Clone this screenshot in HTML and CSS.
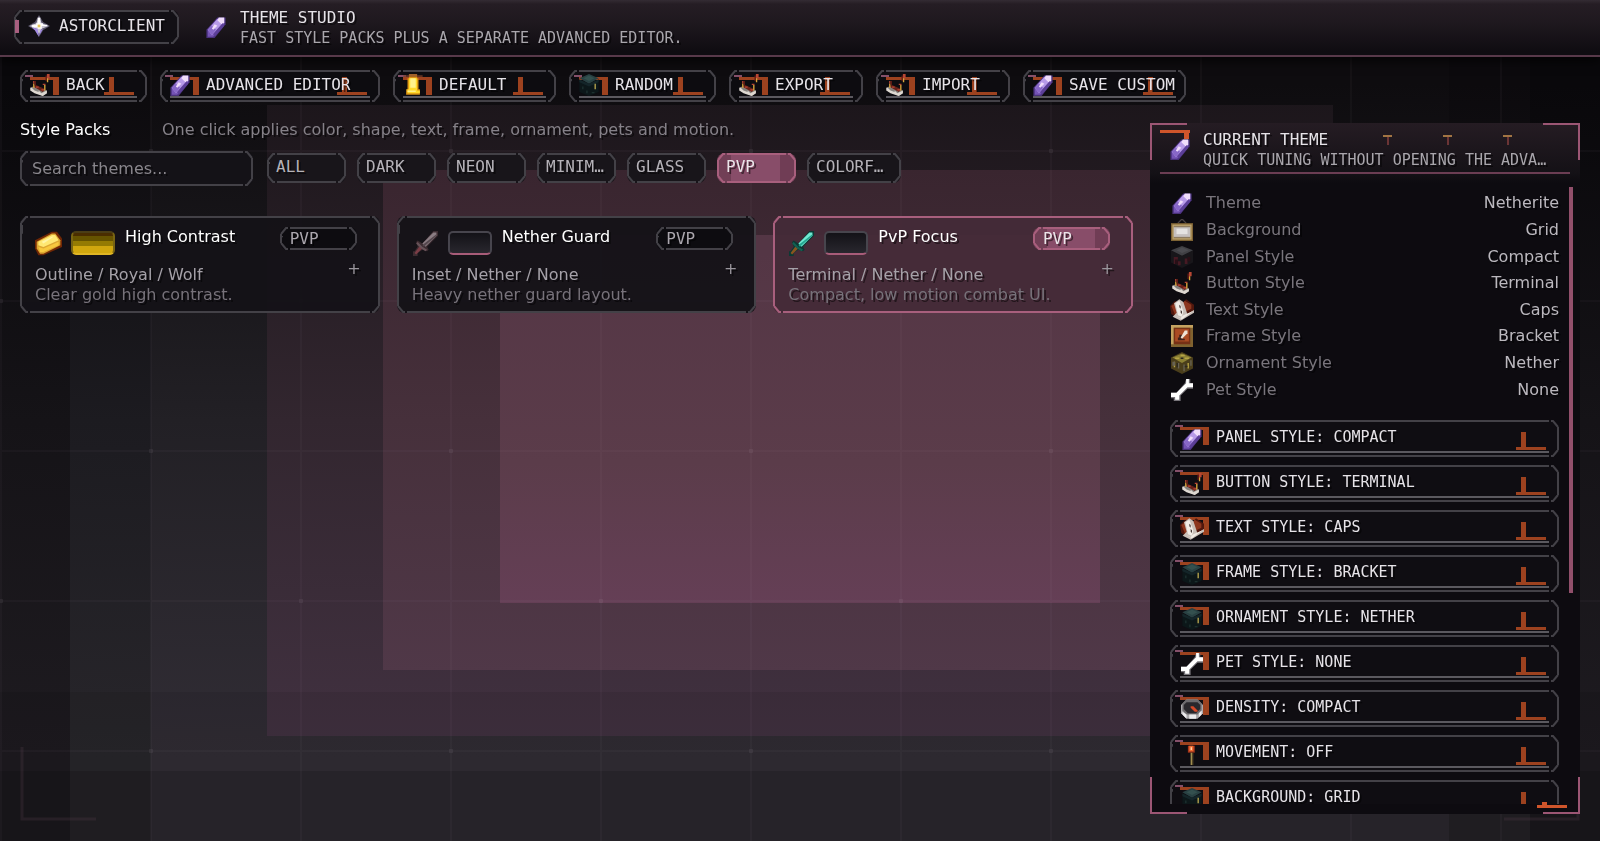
FILE: index.html
```html
<!DOCTYPE html>
<html lang="en">
<head>
<meta charset="utf-8">
<title>Theme Studio</title>
<link rel="stylesheet" href="styles.css">
</head>
<body>
<svg class="backdrop" viewBox="0 0 1600 841" preserveAspectRatio="none" aria-hidden="true">
  <defs>
    <linearGradient id="g0" x1="0" y1="0" x2="0" y2="841" gradientUnits="userSpaceOnUse"><stop offset=".1" stop-color="#09080b"/><stop offset=".5" stop-color="#151317"/><stop offset=".9" stop-color="#1e1b20"/></linearGradient>
    <linearGradient id="g1" x1="0" y1="0" x2="0" y2="841" gradientUnits="userSpaceOnUse"><stop offset=".1" stop-color="#0c0a0d"/><stop offset=".5" stop-color="#1c1b20"/><stop offset=".9" stop-color="#28262b"/></linearGradient>
    <linearGradient id="g2" x1="0" y1="0" x2="0" y2="841" gradientUnits="userSpaceOnUse"><stop offset=".1" stop-color="#0e0c0f"/><stop offset=".5" stop-color="#222025"/><stop offset=".9" stop-color="#312d35"/></linearGradient>
    <linearGradient id="g3" x1="0" y1="0" x2="0" y2="841" gradientUnits="userSpaceOnUse"><stop offset=".12" stop-color="#1c161b"/><stop offset=".5" stop-color="#32262f"/><stop offset=".88" stop-color="#413140"/></linearGradient>
    <linearGradient id="g4" x1="0" y1="0" x2="0" y2="841" gradientUnits="userSpaceOnUse"><stop offset=".2" stop-color="#39252f"/><stop offset=".5" stop-color="#46303b"/><stop offset=".8" stop-color="#503848"/></linearGradient>
    <linearGradient id="g5" x1="0" y1="0" x2="0" y2="841" gradientUnits="userSpaceOnUse"><stop offset=".3" stop-color="#543645"/><stop offset=".55" stop-color="#5b3c4a"/><stop offset=".72" stop-color="#653f56"/></linearGradient>
    <pattern id="grid" x="150" y="0" width="150" height="150" patternUnits="userSpaceOnUse"><path d="M0 0h150v2H0zM0 2h2v148H0z" fill="#cbb8c8" opacity=".035"/></pattern>
    <pattern id="dots" x="148" y="148" width="300" height="300" patternUnits="userSpaceOnUse"><path d="M1 1h4v4H1zM151 151h4v4h-4z" fill="#cbb8c8" opacity=".08"/></pattern>
  </defs>
  <path d="M0 0h1600v841H0z" fill="url(#g0)"/>
  <path d="M70 57h1460v784H70z" fill="url(#g1)"/>
  <path d="M151 57h1298v784H151z" fill="url(#g2)"/>
  <path d="M267 105h1066v631H267z" fill="url(#g3)"/>
  <path d="M383 170h834v500H383z" fill="url(#g4)"/>
  <path d="M500 235h600v368H500z" fill="url(#g5)"/>
  <path d="M0 692h1600v79H0z" fill="#000" opacity=".08"/>
  <path d="M0 771h1600v70H0z" fill="#000" opacity=".22"/>
  <path d="M0 57h1600v784H0z" fill="url(#grid)"/>
  <path d="M0 57h1600v784H0z" fill="url(#dots)"/>
  <path d="M22 747v72h74M1578 747v72h-74" fill="none" stroke="#59414f" stroke-width="3" opacity=".25"/>
</svg>
<svg class="sprites" aria-hidden="true">
  <symbol id="crystal" viewBox="0 0 16 16"><path fill="#49317c" d="M9 1h6v5L7 16H1v-6z"/><path fill="#7453b5" d="M9 2h5v4l-8 9H2v-5z"/><path fill="#b79ae8" d="M9 2l4 3-8 9-3-4z"/><path fill="#8767c7" d="M5 7l3 3-3 4-3-4z"/><path fill="#f0ddfb" d="M10 1h4v4l-2 1-3-3zM7 6l2 1-3 3-1-1z"/><path fill="#5c3f98" d="M13 5l1 2-7 8-1-2z"/></symbol>
  <symbol id="star" viewBox="0 0 16 16"><path fill="#575368" d="M8 0l3 5 5 3-5 3-3 5-3-5-5-3 5-3z"/><path fill="#c8c5d2" d="M8 1l2 5 5 2-5 2-2 4-2-4-5-2 5-2z"/><path fill="#fff" d="M7 2h2v4h2v1h3v1h-4v2H7V9H3V7h3V6h1z"/><path fill="#a38ae4" d="M3 9l4 1 1 6-3-5zM9 11l2-1-3 5z"/><path fill="#e3c961" d="M7 7h2v2H7z"/></symbol>
  <symbol id="comparator" viewBox="0 0 16 16"><path fill="#85817d" d="M1 10l2-1 10 3v2l-3 2-9-4z"/><path fill="#ded8d1" d="M1 10h1l2 2 3 1v-1l2 2 4-2v2l-3 2-6-2-3-2z"/><path fill="#672018" d="M3 9l2-1 7 3-2 2z"/><path fill="#b84734" d="M5 9h2v1H5zM9 11h2v1H9zM3 5h1v2H3zM13 0h2v3h-2zM10 7h2v1h-2z"/><path fill="#d7a63c" d="M3 7h1v3H3zM13 3h1v3h-1zM11 8h1v4h-1z"/><path fill="#671c15" d="M12 1h1v4h-1zM4 5h1v3H4z"/></symbol>
  <symbol id="bell" viewBox="0 0 16 16"><path fill="#7a3f2a" d="M1 1h14v1H1z"/><path fill="#a0612b" d="M5 0h6v2H5z"/><path fill="#d99113" d="M5 2h6v1h1v8h1v4H3v-4h1V3h1z"/><path fill="#ffd929" d="M5 3h6v9h2v2H4v-3h1z"/><path fill="#fff18b" d="M6 3h4v7H6zM4 12h6v1H4z"/></symbol>
  <symbol id="chest" viewBox="0 0 16 16"><path fill="#0c1719" d="M1 4l7 3 7-3v9l-7 3-7-3z"/><path fill="#294143" d="M1 3l7-3 7 3-7 4z"/><path fill="#34504f" d="M4 3l4-2 4 2-4 2z"/><path fill="#142529" d="M1 4l7 3v2L1 6zM8 7l7-3v2L8 9z"/><path fill="#b4a34d" d="M12 7h1v4h-1z"/><path fill="#1c302f" d="M3 9h1v2H3zM6 12h1v2H6zM10 13h2v1h-2z"/></symbol>
  <symbol id="painting" viewBox="0 0 16 16"><path fill="none" stroke="#484143" d="M5 3l3-3 3 3"/><path fill="#7e6334" d="M0 3h16v13H0z"/><path fill="#baa16a" d="M1 4h14v11H1z"/><path fill="#8d7b60" d="M2 5h12v9H2z"/><path fill="#c5c0bf" d="M2 6h12v7H2z"/><path fill="#e4e2e1" d="M4 7h8v4H4z"/></symbol>
  <symbol id="block" viewBox="0 0 16 16"><path fill="#18161a" d="M0 3l8 4 8-4v9l-8 4-8-4z"/><path fill="#404044" d="M0 3l8-3 8 3-8 4z"/><path fill="#4b4b50" d="M4 3l4-2 5 2-5 2z"/><path fill="#461923" d="M2 8h3v2H3v3H2zM5 11h2v3H5zM10 9h2v4h-2z"/><path fill="#290f16" d="M3 10h2v3H3zM12 8h2v3h-2z"/></symbol>
  <symbol id="book" viewBox="0 0 18 16"><path fill="#50170d" d="M0 5l4-4 3 5 5-6 6 4v5L7 15l-6-4z"/><path fill="#8c361e" d="M1 5l3-2 3 7-3 2zM11 1l5 3v3l-6 3-2-5z"/><path fill="#c8bfb8" d="M3 3l4-3 3 2 3 9 5-3v2L8 16l-6-3 3-3z"/><path fill="#f1ece6" d="M4 3l3-2 3 8-1 4-3-1zM4 12l4 2 2-2 7-3-8 6z"/><path fill="#463936" d="M7 4l1 1v2L7 6zM8 8l1 1v2L8 10z"/></symbol>
  <symbol id="frame" viewBox="0 0 16 16"><path fill="#80622f" d="M0 0h16v16H0z"/><path fill="#c4a260" d="M0 0h16v2H2v12H0z"/><path fill="#763015" d="M2 2h12v12H2z"/><path fill="#ab4b23" d="M3 3h10v9H3z"/><path fill="#3e211a" d="M6 7h2v3h2v1H5V9h1z"/><path fill="#eee3d5" d="M7 9l3-5h2v2l-4 4z"/></symbol>
  <symbol id="hay" viewBox="0 0 16 16"><path fill="#4a3e1b" d="M0 4l8-4 8 4v8l-8 4-8-4z"/><path fill="#8b8034" d="M1 4l7-3 7 3-7 4z"/><path fill="#b5a445" d="M3 4h3v1H3zM7 2h3v1H7zM10 4h3v1h-3zM2 7h1v4H2zM12 8h1v4h-1z"/><path fill="#676253" d="M1 7h2v3H1zM5 8h1v4H5zM9 9h1v5H9zM14 6h1v4h-1z"/><path fill="#2c2820" d="M4 8h1v3H4zM10 10h2v1h-2zM7 4h2v1H7z"/></symbol>
  <symbol id="bone" viewBox="0 0 16 16"><path fill="#77747a" d="M11 0h3v3h2v4h-4l-5 5v4H2v-2H0v-4h4l6-7z"/><path fill="#fff" d="M11 0h2v3h3v3h-4l-6 6v3H3v-2H0v-3h4l7-7z"/></symbol>
  <symbol id="compass" viewBox="0 0 16 16"><path fill="#aaa8ab" d="M4 1h8l4 4v6l-4 4H4l-4-4V5z"/><path fill="#6c6a6d" d="M4 1h8l3 3v5l-3 3H4L1 9V4z"/><path fill="#29272c" d="M4 3h8l2 2v3l-3 3H5L2 8V5z"/><path fill="#ecebed" d="M1 10l3 2v3l-3-3zM6 12h5v3H6zM13 11l2-2v3l-2 2z"/><path fill="#d54827" d="M7 6h2l3 3v1h-2L7 7z"/></symbol>
  <symbol id="torch" viewBox="0 0 16 16"><path fill="#a7361c" d="M5 2h5v5H5z"/><path fill="#ed6b32" d="M6 2h3v4H6z"/><path fill="#ffd6ae" d="M7 3h1v2H7z"/><path fill="#9f8c4e" d="M7 7h1v9H7z"/><path fill="#514426" d="M8 7h1v9H8z"/></symbol>
  <symbol id="ingot" viewBox="0 0 16 14"><path fill="#702705" d="M0 5l10-5h3l3 4v5L5 14H2L0 10z"/><path fill="#dda832" d="M1 6l9-5h2l3 4v3L5 13H3l-2-3z"/><path fill="#ffe873" d="M2 6l8-4h2l2 3-9 4-3-1z"/><path fill="#fff5a8" d="M4 6l6-3h1L5 7z"/><path fill="#f8c93f" d="M2 9l3 1 9-4v2l-9 4H3z"/></symbol>
  <symbol id="sword" viewBox="0 0 16 16"><path fill="var(--edge)" d="M13 0h3v3L9 10l1 2-1 1-3-1-3 2v2H0v-3h1l2-3-1-3 1-1 3 2z"/><path fill="var(--blade)" d="M13 1h2v2L8 10 6 8z"/><path fill="var(--shade)" d="M15 2v1l-8 7-1-1z"/><path fill="var(--grip)" d="M4 10l2 1-4 4-1-1z"/><path fill="var(--guard)" d="M3 7l3 3 3 2-1 1-3-2-3-3z"/></symbol>
  <symbol id="bracket-tl" viewBox="0 0 34 22"><path fill="#9d421f" d="M5 2h30v3h-1v15h-6V5H5z"/><path fill="#84506a" d="M0 0h8v2H0z"/></symbol>
  <symbol id="bracket-br" viewBox="0 0 30 18"><path fill="#9d421f" d="M5 0h5v15h20v3H0v-3h5z"/></symbol>
</svg>

<header class="header">
  <button class="brand frame"><svg class="icon"><use href="#star"/></svg>ASTORCLIENT</button>
  <svg class="icon"><use href="#crystal"/></svg>
  <div class="heading">
    <h1>THEME STUDIO</h1>
    <p>FAST STYLE PACKS PLUS A SEPARATE ADVANCED EDITOR.</p>
  </div>
</header>

<nav class="toolbar" aria-label="Theme actions">
  <button class="action frame w-back"><svg class="tl"><use href="#bracket-tl"/></svg><svg class="br"><use href="#bracket-br"/></svg><svg class="icon"><use href="#comparator"/></svg><span>BACK</span></button>
  <button class="action frame w-advanced"><svg class="tl"><use href="#bracket-tl"/></svg><svg class="br"><use href="#bracket-br"/></svg><svg class="icon"><use href="#crystal"/></svg><span>ADVANCED EDITOR</span></button>
  <button class="action frame w-wide"><svg class="tl"><use href="#bracket-tl"/></svg><svg class="br"><use href="#bracket-br"/></svg><svg class="icon"><use href="#bell"/></svg><span>DEFAULT</span></button>
  <button class="action frame w-random"><svg class="tl"><use href="#bracket-tl"/></svg><svg class="br"><use href="#bracket-br"/></svg><svg class="icon"><use href="#chest"/></svg><span>RANDOM</span></button>
  <button class="action frame w-port"><svg class="tl"><use href="#bracket-tl"/></svg><svg class="br"><use href="#bracket-br"/></svg><svg class="icon"><use href="#comparator"/></svg><span>EXPORT</span></button>
  <button class="action frame w-port"><svg class="tl"><use href="#bracket-tl"/></svg><svg class="br"><use href="#bracket-br"/></svg><svg class="icon"><use href="#comparator"/></svg><span>IMPORT</span></button>
  <button class="action frame w-wide"><svg class="tl"><use href="#bracket-tl"/></svg><svg class="br"><use href="#bracket-br"/></svg><svg class="icon"><use href="#crystal"/></svg><span>SAVE CUSTOM</span></button>
</nav>

<main class="main">
  <section class="packs">
    <div class="packs-head">
      <h2>Style Packs</h2>
      <p>One click applies color, shape, text, frame, ornament, pets and motion.</p>
    </div>
    <div class="filters">
      <input class="search frame" type="text" placeholder="Search themes..." aria-label="Search themes">
      <button class="chip frame">ALL</button>
      <button class="chip frame">DARK</button>
      <button class="chip frame">NEON</button>
      <button class="chip frame">MINIM…</button>
      <button class="chip frame">GLASS</button>
      <button class="chip frame active" aria-pressed="true">PVP</button>
      <button class="chip frame long">COLORF…</button>
    </div>
    <div class="cards">
      <article class="card frame">
        <div class="card-head"><svg class="icon large"><use href="#ingot"/></svg><span class="swatch gold"></span><h3>High Contrast</h3><span class="tag frame">PVP</span></div>
        <p class="styles">Outline / Royal / Wolf</p>
        <p class="note">Clear gold high contrast.</p>
        <button class="add" aria-label="Add High Contrast">+</button>
      </article>
      <article class="card frame">
        <div class="card-head"><svg class="icon large netherite"><use href="#sword"/></svg><span class="swatch"></span><h3>Nether Guard</h3><span class="tag frame">PVP</span></div>
        <p class="styles">Inset / Nether / None</p>
        <p class="note">Heavy nether guard layout.</p>
        <button class="add" aria-label="Add Nether Guard">+</button>
      </article>
      <article class="card frame selected">
        <div class="card-head"><svg class="icon large diamond"><use href="#sword"/></svg><span class="swatch"></span><h3>PvP Focus</h3><span class="tag frame active">PVP</span></div>
        <p class="styles">Terminal / Nether / None</p>
        <p class="note">Compact, low motion combat UI.</p>
        <button class="add" aria-label="Add PvP Focus">+</button>
      </article>
    </div>
  </section>

  <aside class="panel">
    <svg class="pins" viewBox="0 0 130 12"><path fill="#a17443" d="M0 0h9v2H0zM60 0h9v2h-9zM120 0h9v2h-9z"/><path fill="#6b3435" d="M4 2h2v8H4zM64 2h2v8h-2zM124 2h2v8h-2z"/></svg>
    <header class="panel-head">
      <svg class="hook" viewBox="0 0 30 30"><path fill="#cf552b" d="M0 0h30v3h-1v6h-5V3H0z"/><use href="#crystal" x="9" y="8" width="22" height="22"/></svg>
      <div>
        <h2>CURRENT THEME</h2>
        <p>QUICK TUNING WITHOUT OPENING THE ADVA…</p>
      </div>
    </header>
    <div class="panel-body">
      <dl class="facts">
        <div><dt><svg class="icon"><use href="#crystal"/></svg>Theme</dt><dd>Netherite</dd></div>
        <div><dt><svg class="icon"><use href="#painting"/></svg>Background</dt><dd>Grid</dd></div>
        <div><dt><svg class="icon"><use href="#block"/></svg>Panel Style</dt><dd>Compact</dd></div>
        <div><dt><svg class="icon"><use href="#comparator"/></svg>Button Style</dt><dd>Terminal</dd></div>
        <div><dt><svg class="icon"><use href="#book"/></svg>Text Style</dt><dd>Caps</dd></div>
        <div><dt><svg class="icon"><use href="#frame"/></svg>Frame Style</dt><dd>Bracket</dd></div>
        <div><dt><svg class="icon"><use href="#hay"/></svg>Ornament Style</dt><dd>Nether</dd></div>
        <div><dt><svg class="icon"><use href="#bone"/></svg>Pet Style</dt><dd>None</dd></div>
      </dl>
      <div class="options">
        <button class="action frame"><svg class="tl"><use href="#bracket-tl"/></svg><svg class="br"><use href="#bracket-br"/></svg><svg class="icon"><use href="#crystal"/></svg><span>PANEL STYLE: COMPACT</span></button>
        <button class="action frame"><svg class="tl"><use href="#bracket-tl"/></svg><svg class="br"><use href="#bracket-br"/></svg><svg class="icon"><use href="#comparator"/></svg><span>BUTTON STYLE: TERMINAL</span></button>
        <button class="action frame"><svg class="tl"><use href="#bracket-tl"/></svg><svg class="br"><use href="#bracket-br"/></svg><svg class="icon"><use href="#book"/></svg><span>TEXT STYLE: CAPS</span></button>
        <button class="action frame"><svg class="tl"><use href="#bracket-tl"/></svg><svg class="br"><use href="#bracket-br"/></svg><svg class="icon"><use href="#chest"/></svg><span>FRAME STYLE: BRACKET</span></button>
        <button class="action frame"><svg class="tl"><use href="#bracket-tl"/></svg><svg class="br"><use href="#bracket-br"/></svg><svg class="icon"><use href="#chest"/></svg><span>ORNAMENT STYLE: NETHER</span></button>
        <button class="action frame"><svg class="tl"><use href="#bracket-tl"/></svg><svg class="br"><use href="#bracket-br"/></svg><svg class="icon"><use href="#bone"/></svg><span>PET STYLE: NONE</span></button>
        <button class="action frame"><svg class="tl"><use href="#bracket-tl"/></svg><svg class="br"><use href="#bracket-br"/></svg><svg class="icon"><use href="#compass"/></svg><span>DENSITY: COMPACT</span></button>
        <button class="action frame"><svg class="tl"><use href="#bracket-tl"/></svg><svg class="br"><use href="#bracket-br"/></svg><svg class="icon"><use href="#torch"/></svg><span>MOVEMENT: OFF</span></button>
        <button class="action frame"><svg class="tl"><use href="#bracket-tl"/></svg><svg class="br"><use href="#bracket-br"/></svg><svg class="icon"><use href="#chest"/></svg><span>BACKGROUND: GRID</span></button>
      </div>
    </div>
    <span class="scrollbar"></span>
    <svg class="foot" viewBox="0 0 30 6"><path fill="#cf552b" d="M5 0h5v3h20v3H0V3h5z"/></svg>
  </aside>
</main>
</body>
</html>
```

FILE: styles.css
```css
* { box-sizing: border-box; }

body {
  margin: 0;
  height: 100vh;
  display: flex;
  flex-direction: column;
  overflow: hidden;
  background: #09080b;
  color: #e6e3e8;
  font: 16px/20px "DejaVu Sans", sans-serif;
  text-shadow: 2px 2px 0 rgba(0, 0, 0, .5);
}

h1, h2, h3, p, dl, dd { margin: 0; font-size: 16px; font-weight: 400; }
button, input { font: inherit; color: inherit; text-shadow: inherit; margin: 0; }
button { cursor: pointer; }

.backdrop { position: fixed; inset: 0; width: 100%; height: 100%; z-index: -1; }
.sprites { position: absolute; width: 0; height: 0; }
.icon { width: 24px; height: 22px; flex: none; }

/* Notched outline: straight edges, cut just before each chamfered corner */
.frame {
  position: relative;
  border: 2px solid transparent;
  border-radius: 8px;
  border-image: url("data:image/svg+xml,%3Csvg xmlns='http://www.w3.org/2000/svg' width='30' height='30'%3E%3Cpath d='M10 1h10M10 29h10M1 10h2M1 7v16M29 7v16M8 1H6L1 7M22 1h2l5 6M8 29H6l-5-6M22 29h2l5-6' fill='none' stroke='%23434147' stroke-width='2'/%3E%3C/svg%3E") 10 / 10px stretch;
  background: #0d0c10;
}
.chip.active, .tag.active, .card.selected {
  border-image-source: url("data:image/svg+xml,%3Csvg xmlns='http://www.w3.org/2000/svg' width='30' height='30'%3E%3Cpath d='M10 1h10M10 29h10M1 7v16M29 7v16M8 1H6L1 7M22 1h2l5 6M8 29H6l-5-6M22 29h2l5-6' fill='none' stroke='%23a85f7d' stroke-width='2'/%3E%3C/svg%3E");
}

.header {
  height: 57px;
  flex: none;
  display: flex;
  align-items: center;
  padding: 0 14px 2px;
  border-bottom: 2px solid #58394a;
  background: linear-gradient(#332b33 0, #251d24 4px, #1e181e 24px, #0f0c11 52px);
  box-shadow: 0 4px 10px rgba(0, 0, 0, .7);
}
.header > .icon { margin: 0 12px 0 25px; }
.heading { padding-top: 3px; }
.brand {
  width: 165px;
  height: 34px;
  padding: 0 0 1px 11px;
  display: flex;
  align-items: center;
  gap: 8px;
  background: #121015;
}
.brand::before {
  content: "";
  position: absolute;
  left: -1px;
  top: 8px;
  width: 4px;
  height: 13px;
  background: #a95f80;
}
.brand, .heading, .action, .chip, .tag, .panel-head { font-family: "DejaVu Sans Mono", monospace; }
.heading p, .panel-head p { font-size: 15px; color: #a9a6ac; }

.toolbar { display: flex; gap: 13px; padding: 13px 20px 0; }
.action {
  height: 32px;
  padding: 0 0 2px 6px;
  display: flex;
  align-items: center;
  gap: 14px;
  text-align: left;
  white-space: nowrap;
}
.action::after {
  content: "";
  position: absolute;
  left: 8px;
  right: 8px;
  bottom: 2px;
  height: 2px;
  background: #5b595f;
}
.action > .icon, .action > span { position: relative; }
.tl { position: absolute; left: 3px; top: 3px; width: 34px; height: 22px; }
.br { position: absolute; right: 11px; bottom: 5px; width: 30px; height: 18px; }
.w-back { width: 127px; }
.w-advanced { width: 220px; }
.w-wide { width: 163px; }
.w-random { width: 147px; }
.w-port { width: 134px; }

.main {
  flex: 1;
  min-height: 0;
  display: grid;
  grid-template-columns: 1fr 430px;
  gap: 17px;
  padding: 19px 20px 27px;
}

.packs-head { display: flex; gap: 46px; line-height: 18px; }
.packs-head h2 { color: #fff; width: 96px; white-space: nowrap; }
.packs-head p { color: #858188; }

.filters { display: flex; align-items: flex-start; gap: 11px; margin-top: 12px; }
.search {
  width: 233px;
  height: 35px;
  margin-right: 3px;
  padding: 0 10px;
  background: #141217;
}
.search::placeholder { color: #89868c; opacity: 1; }
.chip {
  width: 79px;
  height: 30px;
  margin-top: 2px;
  padding: 0 0 3px 7px;
  text-align: left;
  white-space: nowrap;
  background: #18151a;
  color: #b5b2b8;
}
.chip.long { width: 94px; }
.chip.active, .tag.active {
  color: #eae5e9;
  background: linear-gradient(90deg, #713f56 0 12px, #884d69 12px 82%, #703d55 82%);
}

.cards { display: grid; grid-template-columns: repeat(3, 1fr); gap: 17px; margin-top: 30px; }
.card { height: 97px; padding: 10px 21px 0 13px; background: rgba(20, 18, 23, .95); }
.card.selected { background: rgba(68, 43, 55, .94); }
.card-head { display: flex; height: 37px; }
.icon.large { width: 27px; height: 25px; margin-top: 3px; }
.card h3 { flex: 1; margin-left: 10px; line-height: 18px; color: #fff; white-space: nowrap; }
.swatch {
  width: 44px;
  height: 24px;
  margin: 3px 0 0 9px;
  border: 2px solid #47454d;
  border-bottom-color: #a85c79;
  border-radius: 5px;
  background: linear-gradient(#131217, #29272e);
}
.swatch.gold { border-color: #4b3d15 #786413 #dfb524; background: linear-gradient(#4a2d00 0 3px, #665300 3px 8px, #957b03 8px 13px, #d1a70e 13px); }
.tag {
  width: 77px;
  height: 23px;
  margin-top: -1px;
  padding-left: 8px;
  line-height: 19px;
  color: #aba7ae;
}
.styles { color: #a5a1a8; }
.note { color: #77727a; }
.add {
  position: absolute;
  right: 17px;
  top: 41px;
  padding: 0;
  border: 0;
  background: none;
  color: #99959c;
}

.netherite { --edge: #3c2c31; --blade: #8a7c82; --shade: #54474d; --grip: #7b3d46; --guard: #685359; }
.diamond { --edge: #0b3934; --blade: #72ead3; --shade: #25a690; --grip: #8a551f; --guard: #126052; }

.panel {
  position: relative;
  min-height: 0;
  margin-top: 2px;
  padding: 4px 10px 10px;
  display: flex;
  flex-direction: column;
  --pink: #9c5674;
  background:
    linear-gradient(var(--pink) 0 0) 0 0 / 37px 2px,
    linear-gradient(var(--pink) 0 0) 0 0 / 2px 37px,
    linear-gradient(var(--pink) 0 0) 100% 0 / 37px 2px,
    linear-gradient(var(--pink) 0 0) 100% 0 / 2px 37px,
    linear-gradient(var(--pink) 0 0) 0 100% / 37px 2px,
    linear-gradient(var(--pink) 0 0) 0 100% / 2px 37px,
    linear-gradient(var(--pink) 0 0) 100% 100% / 37px 2px,
    linear-gradient(var(--pink) 0 0) 100% 100% / 2px 37px,
    linear-gradient(#251c23 0, #141116 50px, transparent 60px),
    #0d0b10;
  background-repeat: no-repeat;
}
.panel-head {
  display: flex;
  gap: 13px;
  height: 47px;
  flex: none;
  padding-top: 3px;
  border-bottom: 2px solid #6b3d53;
}
.panel-head h2, .panel-head p { line-height: 20px; white-space: nowrap; }
.hook { width: 30px; height: 30px; flex: none; }
.pins { position: absolute; left: 233px; top: 12px; width: 130px; height: 12px; }
.panel-body { flex: 1; min-height: 0; overflow: hidden; padding: 16px 11px 0 10px; }
.facts { display: grid; grid-template-rows: repeat(8, 1fr); height: 213px; margin-bottom: 17px; }
.facts > div { display: flex; justify-content: space-between; align-items: center; }
.facts dt { display: flex; align-items: center; gap: 12px; color: #79757c; }
.facts dd { color: #bbb8be; }
.options { display: grid; gap: 8px; }
.options .action {
  height: 37px;
  padding: 0 0 4px 8px;
  gap: 12px;
  font-size: 15px;
  line-height: 16px;
  background: #0f0d12;
}
.options .icon { margin-top: 4px; }
.scrollbar { position: absolute; right: 7px; top: 64px; width: 4px; height: 406px; background: #914f6b; }
.foot { position: absolute; right: 13px; bottom: 6px; width: 30px; height: 6px; }
```
